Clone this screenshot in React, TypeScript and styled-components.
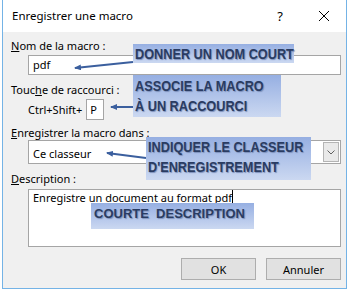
import React from 'react';
import styled, { createGlobalStyle } from 'styled-components';

const GlobalStyle = createGlobalStyle`
body {
  margin: 0;
  background: #ffffff;
  font-family: "Noto Sans", "Liberation Sans", sans-serif;
  font-size: 11px;
  color: #000000;
}
`;

const Dialog = styled.div`
position: relative;
margin-left: 2px;
width: 345px;
height: 289px;
box-sizing: border-box;
border: 1px solid #74b3e6;
border-top: none;
display: flex;
flex-direction: column;
overflow: hidden;
`;

const TitleBar = styled.div`
height: 32px;
flex-shrink: 0;
background: #ffffff;
display: flex;
align-items: center;
padding-left: 9px;
`;

const Title = styled.div`
flex: 1;
font-size: 11.5px;
line-height: 15px;
padding-bottom: 2px;
`;

const TitleButton = styled.div`
width: 44px;
height: 30px;
display: flex;
align-items: center;
justify-content: center;
font-size: 13px;
`;

const Body = styled.div`
flex: 1;
background: #f0f0f0;
padding: 6px 5px 0 8px;
display: flex;
flex-direction: column;
`;

const Label = styled.div<{ $top: number }>`
line-height: 15px;
margin-top: ${p => p.$top}px;
`;

const Indent = styled.div<{ $top: number }>`
margin-left: 17px;
margin-top: ${p => p.$top}px;
`;

const TextBox = styled.div`
height: 20px;
box-sizing: border-box;
border: 1px solid #a5a5a5;
background: #ffffff;
padding-left: 4px;
line-height: 18px;
`;

const ShortcutRow = styled.div`
display: flex;
align-items: center;
gap: 4px;
`;

const KeyBox = styled.div`
width: 18px;
height: 21px;
box-sizing: border-box;
border: 1px solid #a5a5a5;
background: #ffffff;
padding-left: 3px;
line-height: 19px;
`;

const Combo = styled.div`
height: 24px;
box-sizing: border-box;
border: 1px solid #a5a5a5;
background: #ffffff;
display: flex;
align-items: center;
padding: 0 1px 0 4px;
`;

const ComboText = styled.div`
flex: 1;
line-height: 15px;
padding-top: 2px;
`;

const ComboButton = styled.div`
width: 16px;
height: 20px;
box-sizing: border-box;
border: 1px solid #b4b4b4;
background: #e9e9e9;
display: flex;
align-items: center;
justify-content: center;
`;

const Memo = styled.div`
height: 58px;
box-sizing: border-box;
border: 1px solid #a5a5a5;
background: #ffffff;
padding: 0 4px;
line-height: 15px;
`;

const Caret = styled.span`
display: inline-block;
width: 1px;
height: 14px;
background: #000000;
vertical-align: -2px;
`;

const Buttons = styled.div`
display: flex;
justify-content: flex-end;
gap: 10px;
margin-top: 11px;
`;

const Button = styled.div`
width: 75px;
height: 22px;
box-sizing: border-box;
border: 1px solid #adadad;
background: #e1e1e1;
display: flex;
align-items: center;
justify-content: center;
`;

const Callout = styled.div<{ $x: number; $y: number; $w: number; $h: number; $pad: number }>`
position: absolute;
left: ${p => p.$x}px;
top: ${p => p.$y}px;
width: ${p => p.$w}px;
height: ${p => p.$h}px;
box-sizing: border-box;
padding: ${p => p.$pad}px 0 0 2px;
background: linear-gradient(#96afe2, #cbd8f1);
color: #2a3c62;
font-family: "Liberation Sans", Arial, sans-serif;
font-weight: bold;
font-size: 15.5px;
line-height: 20px;
text-shadow: 1px 1px 1px #7d90ba;
white-space: nowrap;
`;

// narrow bold look: Arial bold squeezed horizontally
const Narrow = styled.span`
display: inline-block;
transform: scaleX(0.82);
transform-origin: left top;
`;

const WideCallout = styled(Callout)`
font-size: 13px;
line-height: 18px;
padding-left: 3px;
`;

const Arrows = styled.svg`
position: absolute;
left: 0;
top: 0;
pointer-events: none;
`;

const CloseIcon = () => (
  <svg width="12" height="12" viewBox="0 0 12 12">
    <path d="M1 1 L11 11 M11 1 L1 11" stroke="#000" strokeWidth="1" />
  </svg>
);

const Chevron = () => (
  <svg width="8" height="5" viewBox="0 0 8 5">
    <path d="M0.5 0.5 L4 4 L7.5 0.5" stroke="#606060" fill="none" strokeWidth="1" />
  </svg>
);

export default function App() {
  return (
    <>
      <GlobalStyle />
      <Dialog>
        <TitleBar>
          <Title>Enregistrer une macro</Title>
          <TitleButton>?</TitleButton>
          <TitleButton><CloseIcon /></TitleButton>
        </TitleBar>
        <Body>
          <Label $top={0}><u>N</u>om de la macro :</Label>
          <Indent $top={2}>
            <TextBox>pdf</TextBox>
          </Indent>
          <Label $top={7}>Touc<u>h</u>e de raccourci :</Label>
          <Indent $top={2}>
            <ShortcutRow>
              <span>Ctrl+Shift+</span>
              <KeyBox>P</KeyBox>
            </ShortcutRow>
          </Indent>
          <Label $top={5}><u>E</u>nregistrer la macro dans :</Label>
          <Indent $top={0}>
            <Combo>
              <ComboText>Ce classeur</ComboText>
              <ComboButton><Chevron /></ComboButton>
            </Combo>
          </Indent>
          <Label $top={7}><u>D</u>escription :</Label>
          <Indent $top={3}>
            <Memo>Enregistre un document au format pdf<Caret /></Memo>
          </Indent>
          <Buttons>
            <Button>OK</Button>
            <Button>Annuler</Button>
          </Buttons>
        </Body>

        <Arrows width="345" height="289" viewBox="0 0 345 289">
          <defs>
            <marker id="head" markerWidth="7" markerHeight="6" refX="6" refY="3" orient="auto" markerUnits="userSpaceOnUse">
              <path d="M0 0 L7 3 L0 6 Z" fill="#3b5f9e" />
            </marker>
          </defs>
          <line x1="130" y1="62" x2="72" y2="68" stroke="#3b5f9e" strokeWidth="2" markerEnd="url(#head)" />
          <line x1="130" y1="107" x2="108" y2="107" stroke="#3b5f9e" strokeWidth="2" markerEnd="url(#head)" />
          <line x1="143" y1="158" x2="104" y2="153" stroke="#3b5f9e" strokeWidth="2" markerEnd="url(#head)" />
        </Arrows>

        <Callout $x={130} $y={44} $w={161} $h={19} $pad={0}>
          <Narrow>DONNER UN NOM COURT</Narrow>
        </Callout>
        <Callout $x={130} $y={75} $w={148} $h={42} $pad={1}>
          <Narrow>ASSOCIE LA MACRO<br />À UN RACCOURCI</Narrow>
        </Callout>
        <Callout $x={143} $y={137} $w={165} $h={43} $pad={0}>
          <Narrow>INDIQUER LE CLASSEUR<br />D'ENREGISTREMENT</Narrow>
        </Callout>
        <WideCallout $x={88} $y={203} $w={163} $h={26} $pad={2}>COURTE&nbsp; DESCRIPTION</WideCallout>
      </Dialog>
    </>
  );
}
